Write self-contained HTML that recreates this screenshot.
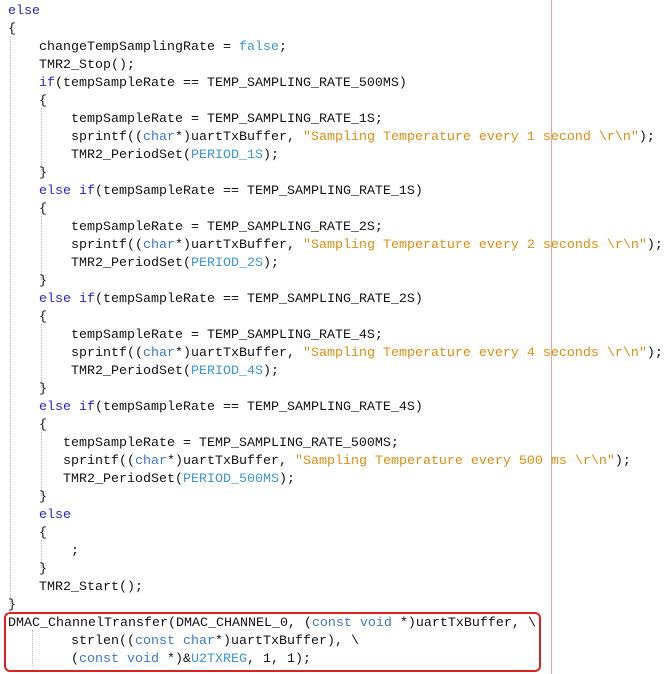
<!DOCTYPE html>
<html><head><style>
body{margin:0;width:672px;height:674px;background:#fff;position:relative;overflow:hidden;font-family:"Liberation Mono",monospace;font-size:13.33px;color:#111;}
.l{position:absolute;white-space:pre;line-height:18px;height:18px;margin-top:2px;}
.k{color:#2828c8}
.t{color:#3a78c8}
.b{color:#3c96d2}
.s{color:#e08c10}
.g{position:absolute;width:0;border-left:1px dotted #bbb;}
</style></head><body>
<div style="position:absolute;left:551px;top:0;width:1px;height:674px;background:#f4a0a0"></div>
<div class="g" style="left:10px;top:36px;height:570px"></div>
<div class="g" style="left:41px;top:108px;height:64px"></div>
<div class="g" style="left:41px;top:216px;height:64px"></div>
<div class="g" style="left:41px;top:324px;height:64px"></div>
<div class="g" style="left:41px;top:432px;height:64px"></div>
<div class="g" style="left:41px;top:540px;height:28px"></div>
<div class="g" style="left:32px;top:630px;height:36px"></div>
<div style="position:absolute;left:4px;top:612px;width:533px;height:56px;border:2px solid #e02020;border-radius:6px"></div>
<div class="l" style="left:8px;top:1px"><span class="k">else</span></div>
<div class="l" style="left:8px;top:19px">{</div>
<div class="l" style="left:39px;top:37px">changeTempSamplingRate = <span class="b">false</span>;</div>
<div class="l" style="left:39px;top:55px">TMR2_Stop();</div>
<div class="l" style="left:39px;top:73px"><span class="k">if</span>(tempSampleRate == TEMP_SAMPLING_RATE_500MS)</div>
<div class="l" style="left:39px;top:91px">{</div>
<div class="l" style="left:71px;top:109px">tempSampleRate = TEMP_SAMPLING_RATE_1S;</div>
<div class="l" style="left:71px;top:127px">sprintf((<span class="t">char</span>*)uartTxBuffer, <span class="s">"Sampling Temperature every 1 second \r\n"</span>);</div>
<div class="l" style="left:71px;top:145px">TMR2_PeriodSet(<span class="b">PERIOD_1S</span>);</div>
<div class="l" style="left:39px;top:163px">}</div>
<div class="l" style="left:39px;top:181px"><span class="k">else if</span>(tempSampleRate == TEMP_SAMPLING_RATE_1S)</div>
<div class="l" style="left:39px;top:199px">{</div>
<div class="l" style="left:71px;top:217px">tempSampleRate = TEMP_SAMPLING_RATE_2S;</div>
<div class="l" style="left:71px;top:235px">sprintf((<span class="t">char</span>*)uartTxBuffer, <span class="s">"Sampling Temperature every 2 seconds \r\n"</span>);</div>
<div class="l" style="left:71px;top:253px">TMR2_PeriodSet(<span class="b">PERIOD_2S</span>);</div>
<div class="l" style="left:39px;top:271px">}</div>
<div class="l" style="left:39px;top:289px"><span class="k">else if</span>(tempSampleRate == TEMP_SAMPLING_RATE_2S)</div>
<div class="l" style="left:39px;top:307px">{</div>
<div class="l" style="left:71px;top:325px">tempSampleRate = TEMP_SAMPLING_RATE_4S;</div>
<div class="l" style="left:71px;top:343px">sprintf((<span class="t">char</span>*)uartTxBuffer, <span class="s">"Sampling Temperature every 4 seconds \r\n"</span>);</div>
<div class="l" style="left:71px;top:361px">TMR2_PeriodSet(<span class="b">PERIOD_4S</span>);</div>
<div class="l" style="left:39px;top:379px">}</div>
<div class="l" style="left:39px;top:397px"><span class="k">else if</span>(tempSampleRate == TEMP_SAMPLING_RATE_4S)</div>
<div class="l" style="left:39px;top:415px">{</div>
<div class="l" style="left:63px;top:433px">tempSampleRate = TEMP_SAMPLING_RATE_500MS;</div>
<div class="l" style="left:63px;top:451px">sprintf((<span class="t">char</span>*)uartTxBuffer, <span class="s">"Sampling Temperature every 500 ms \r\n"</span>);</div>
<div class="l" style="left:63px;top:469px">TMR2_PeriodSet(<span class="b">PERIOD_500MS</span>);</div>
<div class="l" style="left:39px;top:487px">}</div>
<div class="l" style="left:39px;top:505px"><span class="k">else</span></div>
<div class="l" style="left:39px;top:523px">{</div>
<div class="l" style="left:71px;top:541px">;</div>
<div class="l" style="left:39px;top:559px">}</div>
<div class="l" style="left:39px;top:577px">TMR2_Start();</div>
<div class="l" style="left:8px;top:595px">}</div>
<div class="l" style="left:8px;top:613px">DMAC_ChannelTransfer(DMAC_CHANNEL_0, (<span class="t">const void</span> *)uartTxBuffer, \</div>
<div class="l" style="left:71px;top:631px">strlen((<span class="t">const char</span>*)uartTxBuffer), \</div>
<div class="l" style="left:71px;top:649px">(<span class="t">const void</span> *)&amp;<span class="b">U2TXREG</span>, 1, 1);</div>
</body></html>
